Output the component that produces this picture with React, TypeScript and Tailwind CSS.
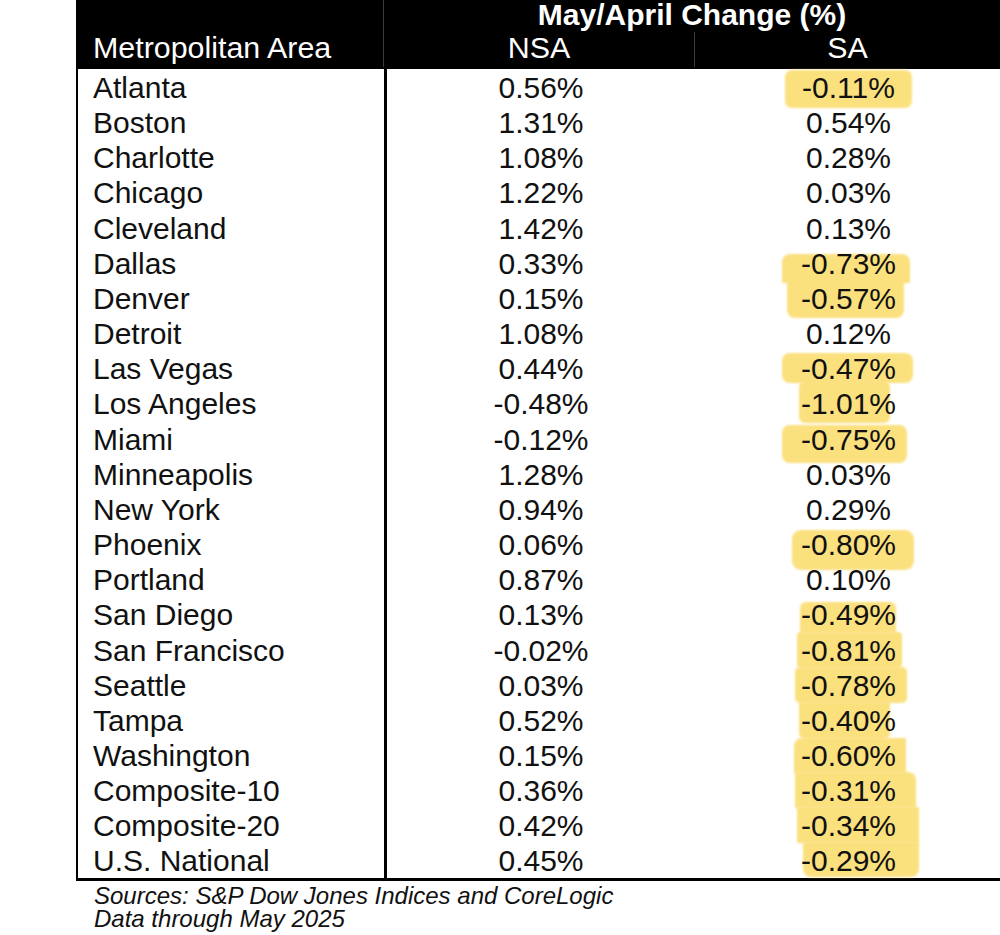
const font = { fontFamily: '"Liberation Sans", Arial, sans-serif' };

interface Row {
  name: string;
  nsa: string;
  sa: string;
  // marker highlight placement inside the SA cell (written out in full)
  mark?: string;
}

const rows: Row[] = [
  { name: 'Atlanta', nsa: '0.56%', sa: '-0.11%', mark: 'left-[90px] right-[90px] top-[1px] -bottom-[4px] rounded-[7px]' },
  { name: 'Boston', nsa: '1.31%', sa: '0.54%' },
  { name: 'Charlotte', nsa: '1.08%', sa: '0.28%' },
  { name: 'Chicago', nsa: '1.22%', sa: '0.03%' },
  { name: 'Cleveland', nsa: '1.42%', sa: '0.13%' },
  { name: 'Dallas', nsa: '0.33%', sa: '-0.73%', mark: 'left-[87px] right-[92px] top-[9px] -bottom-[3px] rounded-t-[8px]' },
  { name: 'Denver', nsa: '0.15%', sa: '-0.57%', mark: 'left-[92px] right-[98px] -top-[1px] -bottom-[3px] rounded-b-[8px]' },
  { name: 'Detroit', nsa: '1.08%', sa: '0.12%' },
  { name: 'Las Vegas', nsa: '0.44%', sa: '-0.47%', mark: 'left-[87px] right-[89px] top-[3px] bottom-[2px] rounded-[8px]' },
  { name: 'Los Angeles', nsa: '-0.48%', sa: '-1.01%', mark: 'left-[104px] right-[112px] -top-[4px] -bottom-[2px] rounded-[6px]' },
  { name: 'Miami', nsa: '-0.12%', sa: '-0.75%', mark: 'left-[87px] right-[95px] top-[4px] -bottom-[7px] rounded-[8px]' },
  { name: 'Minneapolis', nsa: '1.28%', sa: '0.03%' },
  { name: 'New York', nsa: '0.94%', sa: '0.29%' },
  { name: 'Phoenix', nsa: '0.06%', sa: '-0.80%', mark: 'left-[97px] right-[88px] top-[4px] -bottom-[9px] rounded-[9px]' },
  { name: 'Portland', nsa: '0.87%', sa: '0.10%' },
  { name: 'San Diego', nsa: '0.13%', sa: '-0.49%', mark: 'left-[105px] right-[106px] top-[6px] -bottom-[1px] rounded-t-[6px]' },
  { name: 'San Francisco', nsa: '-0.02%', sa: '-0.81%', mark: 'left-[102px] right-[100px] top-0 -bottom-[1px] rounded-[4px]' },
  { name: 'Seattle', nsa: '0.03%', sa: '-0.78%', mark: 'left-[100px] right-[95px] top-0 -bottom-[1px] rounded-[5px]' },
  { name: 'Tampa', nsa: '0.52%', sa: '-0.40%', mark: 'left-[104px] right-[112px] top-0 -bottom-[2px] rounded-b-[6px]' },
  { name: 'Washington', nsa: '0.15%', sa: '-0.60%', mark: 'left-[99px] right-[96px] top-[1px] -bottom-[1px] rounded-tl-[8px]' },
  { name: 'Composite-10', nsa: '0.36%', sa: '-0.31%', mark: 'left-[100px] right-[86px] top-0 -bottom-[1px] rounded-tr-[8px]' },
  { name: 'Composite-20', nsa: '0.42%', sa: '-0.34%', mark: 'left-[102px] right-[83px] top-0 -bottom-[1px]' },
  { name: 'U.S. National', nsa: '0.45%', sa: '-0.29%', mark: 'left-[108px] right-[83px] top-0 bottom-[1px] rounded-b-[8px]' },
];

export default function App() {
  return (
    <div className="w-[1000px] h-[935px] bg-white overflow-hidden text-[#111]" style={font}>
      {/* Header */}
      <div className="ml-[76px] w-[924px] bg-black text-white">
        <div className="grid grid-cols-[308px_1fr] h-[32px]">
          <div className="border-r border-[#3c3c3c]" />
          <div className="text-center font-bold text-[30px] leading-[30px]">May/April Change (%)</div>
        </div>
        <div className="grid grid-cols-[308px_311px_1fr] h-[35px] text-[30.4px] leading-[31px]">
          <div className="pl-[17px] border-r border-[#3c3c3c]">Metropolitan Area</div>
          <div className="text-center border-r border-[#3c3c3c]">NSA</div>
          <div className="text-center">SA</div>
        </div>
      </div>

      {/* Body */}
      <div className="ml-[76px] w-[926px] border-t-2 border-l-2 border-b-[3px] border-black">
        {rows.map((r) => (
          <div key={r.name} className="grid grid-cols-[309px_308px_1fr] h-[35.17px] text-[30px] leading-[33px]">
            <div className="pl-[15px] pt-[2px] border-r-[3px] border-black">{r.name}</div>
            <div className="pt-[2px] text-center">{r.nsa}</div>
            <div className="relative pt-[2px] text-center">
              {r.mark && <span className={`absolute bg-[#fbe07e] blur-[0.8px] ${r.mark}`} />}
              <span className="relative">{r.sa}</span>
            </div>
          </div>
        ))}
      </div>

      {/* Footer */}
      <div className="ml-[94px] mt-[3px] italic text-[24px] leading-[23px]">
        <p>Sources: S&amp;P Dow Jones Indices and CoreLogic</p>
        <p>Data through May 2025</p>
      </div>
    </div>
  );
}
